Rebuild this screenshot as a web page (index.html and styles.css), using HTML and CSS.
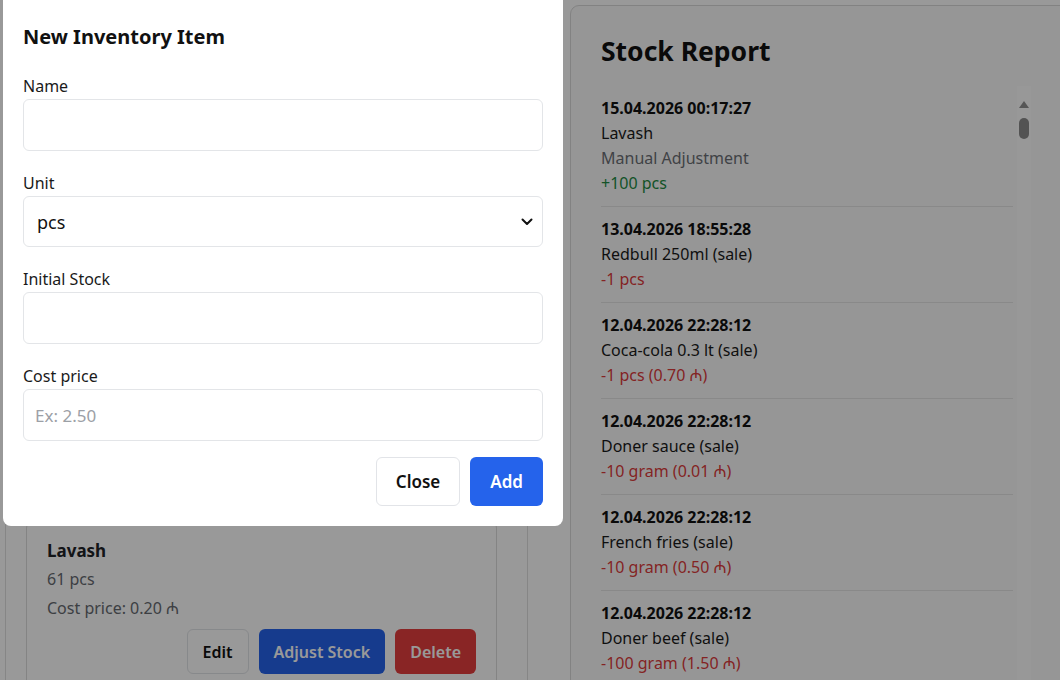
FILE: index.html
```html
<!DOCTYPE html>
<html lang="en">
<head>
<meta charset="utf-8">
<title>Inventory</title>
<link rel="stylesheet" href="styles.css">
</head>
<body>
<div class="page">
  <section class="inventory">
    <div class="inv-head"></div>
    <div class="items">
      <div class="item item-covered"></div>
      <div class="item item-covered"></div>
      <div class="item">
        <div class="item-name">Lavash</div>
        <div class="item-qty">61 pcs</div>
        <div class="item-cost">Cost price: 0.20 ₼</div>
        <div class="item-actions"><button class="btn btn-light">Edit</button><button class="btn btn-primary">Adjust Stock</button><button class="btn btn-danger">Delete</button></div>
      </div>
    </div>
  </section>

  <section class="report">
    <h1 class="report-title">Stock Report</h1>
    <div class="report-body">
      <ul class="entries">
        <li class="entry">
          <div class="entry-date">15.04.2026 00:17:27</div>
          <div class="entry-name">Lavash</div>
          <div class="entry-note">Manual Adjustment</div>
          <div class="entry-amount plus">+100 pcs</div>
        </li>
        <li class="entry">
          <div class="entry-date">13.04.2026 18:55:28</div>
          <div class="entry-name">Redbull 250ml (sale)</div>
          <div class="entry-amount minus">-1 pcs</div>
        </li>
        <li class="entry">
          <div class="entry-date">12.04.2026 22:28:12</div>
          <div class="entry-name">Coca-cola 0.3 lt (sale)</div>
          <div class="entry-amount minus">-1 pcs (0.70 ₼)</div>
        </li>
        <li class="entry">
          <div class="entry-date">12.04.2026 22:28:12</div>
          <div class="entry-name">Doner sauce (sale)</div>
          <div class="entry-amount minus">-10 gram (0.01 ₼)</div>
        </li>
        <li class="entry">
          <div class="entry-date">12.04.2026 22:28:12</div>
          <div class="entry-name">French fries (sale)</div>
          <div class="entry-amount minus">-10 gram (0.50 ₼)</div>
        </li>
        <li class="entry">
          <div class="entry-date">12.04.2026 22:28:12</div>
          <div class="entry-name">Doner beef (sale)</div>
          <div class="entry-amount minus">-100 gram (1.50 ₼)</div>
        </li>
      </ul>
      <div class="scrollbar">
        <span class="scroll-arrow"></span>
        <span class="scroll-thumb"></span>
      </div>
    </div>
  </section>
</div>

<div class="overlay"></div>

<div class="modal">
  <h3 class="modal-title">New Inventory Item</h3>
  <form class="form">
    <label class="field">
      <span class="field-label">Name</span>
      <input class="control" type="text">
    </label>
    <label class="field">
      <span class="field-label">Unit</span>
      <span class="select-wrap">
        <select class="control select">
          <option>pcs</option>
          <option>gram</option>
        </select>
        <svg class="chevron" viewBox="0 0 12 8" width="12" height="8"><path d="M1.5 1.5 L6 6 L10.5 1.5" fill="none" stroke="#111" stroke-width="2" stroke-linecap="round" stroke-linejoin="round"/></svg>
      </span>
    </label>
    <label class="field">
      <span class="field-label">Initial Stock</span>
      <input class="control" type="text">
    </label>
    <label class="field">
      <span class="field-label">Cost price</span>
      <input class="control" type="text" placeholder="Ex: 2.50">
    </label>
    <div class="modal-actions">
      <button type="button" class="btn btn-light btn-lg">Close</button>
      <button type="button" class="btn btn-primary btn-lg">Add</button>
    </div>
  </form>
</div>
</body>
</html>
```

FILE: styles.css
```css
* { box-sizing: border-box; }

html, body {
  margin: 0;
  padding: 0;
  height: 100%;
  overflow: hidden;
}

body {
  font-family: "Noto Sans", "Open Sans", "DejaVu Sans", sans-serif;
  color: #1f2328;
  background: #ffffff;
  font-size: 16px;
}

.page {
  display: grid;
  grid-template-columns: 523px 520px;
  column-gap: 42px;
  padding: 5px 0 0 5px;
}

/* ---------- Inventory (left) ---------- */
.inventory {
  border: 1px solid #e0e0e0;
  border-radius: 8px;
  padding: 20px 30px 0 20px;
  min-height: 700px;
}

.inv-head {
  height: 112px;
  margin-bottom: 16px;
}

.items {
  display: flex;
  flex-direction: column;
  gap: 16px;
}

.item {
  border: 1px solid #dcdcdc;
  border-radius: 6px;
  padding: 14px 20px 15px 20px;
  height: 168px;
}

.item-name {
  font-size: 17px;
  font-weight: 700;
  line-height: 27px;
}

.item-qty {
  font-size: 16px;
  line-height: 24px;
  margin-top: 3px;
  color: #666a70;
}

.item-cost {
  font-size: 16px;
  line-height: 24px;
  margin-top: 5px;
  color: #666a70;
}

.item-actions {
  display: flex;
  justify-content: flex-end;
  gap: 10px;
  margin-top: 9px;
}

.item-actions .btn {
  height: 45px;
  font-size: 16px;
  padding: 0 14px;
}

.item-actions .btn-light {
  padding: 0 15px;
}

/* ---------- Buttons ---------- */
.btn {
  font-family: inherit;
  font-weight: 600;
  border-radius: 6px;
  border: 1px solid transparent;
  cursor: pointer;
  line-height: 1;
}

.btn-light {
  background: #ffffff;
  border-color: #e2e4e8;
  color: #111;
}

.btn-primary {
  background: #2563eb;
  color: #ffffff;
}

.btn-danger {
  background: #e53e3e;
  color: #ffffff;
}

/* ---------- Stock report (right) ---------- */
.report {
  border: 1px solid #d9d9d9;
  border-radius: 9px;
  background: #fbfbfb;
  padding: 28px 0 0 30px;
  height: 720px;
}

.report-title {
  margin: 0 0 18px 0;
  font-size: 26.5px;
  font-weight: 700;
  line-height: 34px;
  color: #111;
}

.report-body {
  display: flex;
  gap: 4px;
}

.entries {
  list-style: none;
  margin: 0;
  padding: 0;
  width: 412px;
  height: 620px;
  overflow: hidden;
}

.entry {
  padding: 10px 0 10px 0;
  border-bottom: 1px solid #e4e4e4;
  font-size: 16px;
  line-height: 25px;
}

.entry-date {
  font-weight: 700;
  color: #111;
}

.entry-name { color: #1a1a1a; }

.entry-note { color: #6b6f75; }

.plus { color: #228b43; }

.minus { color: #dc3b3b; }

.scrollbar {
  width: 14px;
  height: 620px;
  background: #fdfdfd;
  display: flex;
  flex-direction: column;
  align-items: center;
  padding-top: 15px;
}

.scroll-arrow {
  width: 0;
  height: 0;
  border-left: 5px solid transparent;
  border-right: 5px solid transparent;
  border-bottom: 7px solid #8f8f8f;
}

.scroll-thumb {
  width: 10px;
  height: 21px;
  border-radius: 5px;
  background: #8a8a8a;
  margin-top: 10px;
}

/* ---------- Overlay & modal ---------- */
.overlay {
  position: fixed;
  inset: 0;
  background: rgba(0, 0, 0, 0.4);
}

.modal {
  position: fixed;
  left: 3px;
  top: -20px;
  width: 560px;
  background: #ffffff;
  border-radius: 8px;
  padding: 43px 20px 20px 20px;
}

.modal-title {
  margin: 0 0 23px 0;
  font-size: 20px;
  font-weight: 700;
  line-height: 28px;
  color: #111;
}

.form {
  display: flex;
  flex-direction: column;
  gap: 20px;
}

.field {
  display: flex;
  flex-direction: column;
  gap: 1px;
}

.field-label {
  font-size: 16px;
  line-height: 24px;
  color: #1a1a1a;
}

.control {
  width: 100%;
  height: 52px;
  border: 1px solid #e3e5e8;
  border-radius: 6px;
  padding: 0 11px;
  font-family: inherit;
  font-size: 18px;
  color: #111;
  background: #ffffff;
  outline: none;
}

.control::placeholder {
  color: #9ca0a6;
  font-size: 17px;
}

.select-wrap {
  position: relative;
  display: block;
}

.select {
  appearance: none;
  -webkit-appearance: none;
  height: 51px;
  padding-left: 13px;
}

.chevron {
  position: absolute;
  right: 10px;
  top: 22px;
  pointer-events: none;
}

.modal-actions {
  display: flex;
  justify-content: flex-end;
  gap: 10px;
  margin-top: -4px;
}

.btn-lg {
  height: 49px;
  font-size: 17px;
  padding: 0 19px;
}
```
